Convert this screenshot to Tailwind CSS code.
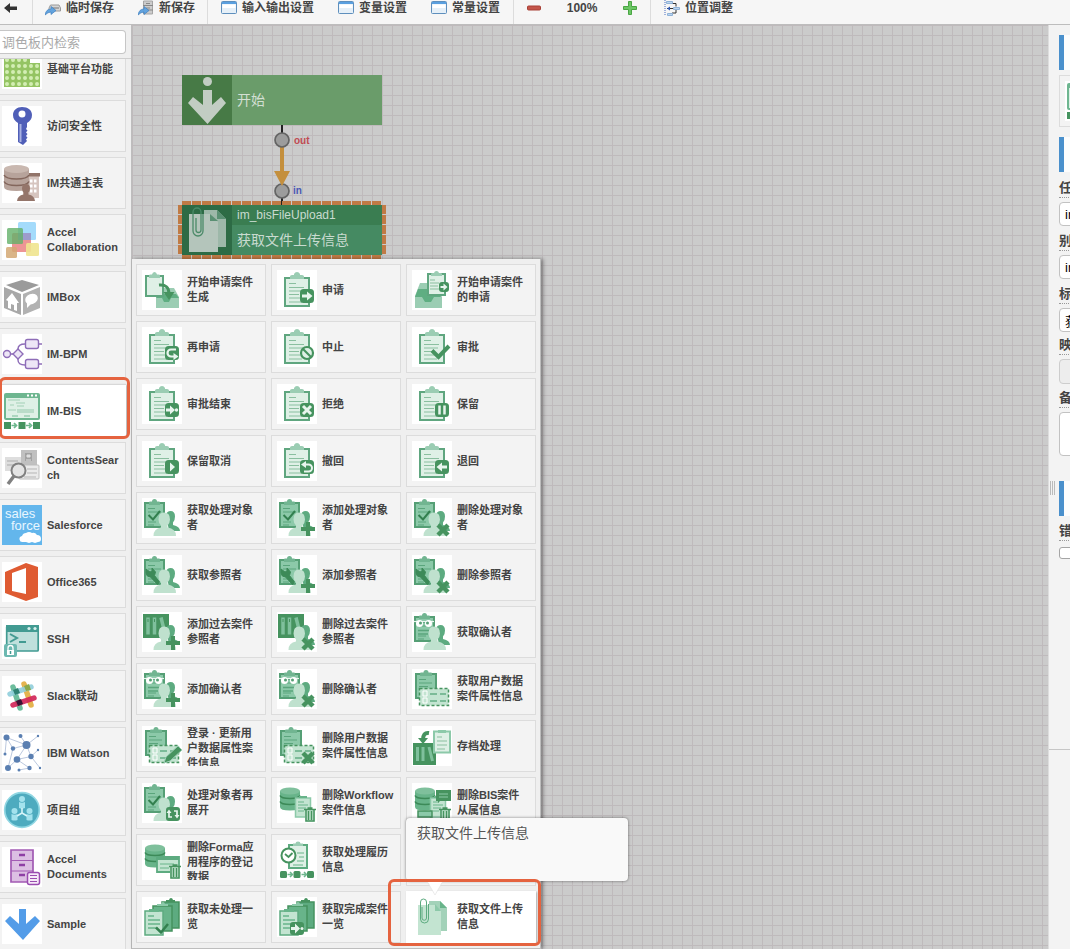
<!DOCTYPE html>
<html lang="zh-CN">
<head>
<meta charset="utf-8">
<title>工作流编辑器</title>
<script src="https://cdn.jsdelivr.net/npm/@tailwindcss/browser@4"></script>
</head>
<body class="h-screen overflow-hidden bg-[#efefef] font-['Liberation_Sans','Noto_Sans_CJK_SC',sans-serif] text-[#444] flex flex-col">

<svg class="hidden" aria-hidden="true">
  <!-- clipboard and its badges -->
  <symbol id="clip" viewBox="0 0 40 40"><path d="M8 8h24v28H8z" fill="#dff0e6" stroke="#5fa67f" stroke-width="2"/><path d="M13 9V6.500q0-1.500 2-1.500h2V4q1-2 3-2t3 2v1h2q2 0 2 1.500V9z" fill="#9bcdb3"/><path d="M12 13.500h7M12 17.500h15M12 21h14M12 24.500h10M12 28h11M12 32h13" stroke="#8abf9f" stroke-width="1.200"/></symbol>
  <symbol id="badge" viewBox="0 0 40 40"><rect x="23" y="19" width="14" height="14" rx="3.500" fill="#46935f"/></symbol>
  <symbol id="b-right" viewBox="0 0 40 40"><use href="#badge"/><path d="M25 24.500h5V21.500l5.500 4.500-5.500 4.500V27.500h-5z" fill="#e8f5ee"/></symbol>
  <symbol id="b-left" viewBox="0 0 40 40"><use href="#badge"/><path d="M35 24.500h-5V21.500l-5.500 4.500 5.500 4.500V27.500h5z" fill="#e8f5ee"/></symbol>
  <symbol id="b-end" viewBox="0 0 40 40"><use href="#badge"/><path d="M24 24.500h4V21.500l5 4.500-5 4.500V27.500h-4z" fill="#e8f5ee"/><circle cx="34.500" cy="26" r="1.700" fill="#e8f5ee"/></symbol>
  <symbol id="b-redo" viewBox="0 0 40 40"><use href="#badge"/><path d="M34 22.500h-5a3.500 3.500 0 0 0 0 7h3" fill="none" stroke="#e8f5ee" stroke-width="2.200"/><path d="M31.500 26l5 3.500-5 3.500z" fill="#e8f5ee"/></symbol>
  <symbol id="b-undo" viewBox="0 0 40 40"><use href="#badge"/><path d="M28 23.500h3.500a3.500 3.500 0 0 1 0 7h-4.500" fill="none" stroke="#e8f5ee" stroke-width="2"/><path d="M29 20l-5 3.500 5 3.500z" fill="#e8f5ee"/></symbol>
  <symbol id="b-stop" viewBox="0 0 40 40"><circle cx="30" cy="26" r="6" fill="#dff0e6" stroke="#46935f" stroke-width="2.200"/><path d="M26 22l8 8" stroke="#46935f" stroke-width="2.200"/></symbol>
  <symbol id="b-check" viewBox="0 0 40 40"><path d="M20 23.500l6.500 6.500L37 19" fill="none" stroke="#46935f" stroke-width="4"/></symbol>
  <symbol id="b-x" viewBox="0 0 40 40"><use href="#badge"/><path d="M26 22l8 8M34 22l-8 8" stroke="#e8f5ee" stroke-width="3"/></symbol>
  <symbol id="b-pause" viewBox="0 0 40 40"><use href="#badge"/><path d="M27.500 21.500v9M32.500 21.500v9" stroke="#e8f5ee" stroke-width="2.500"/></symbol>
  <symbol id="b-play" viewBox="0 0 40 40"><use href="#badge"/><path d="M28 21.500l5 4.500-5 4.500z" fill="#e8f5ee"/></symbol>
  <symbol id="b-loop" viewBox="0 0 40 40"><rect x="24" y="24" width="14" height="14" rx="3" fill="#46935f"/><path d="M32 28h3v6M30 34h-3v-6" fill="none" stroke="#e8f5ee" stroke-width="1.700"/><path d="M32.500 32h5l-2.500 3.500zM24.500 30h5l-2.500-3.500z" fill="#e8f5ee"/></symbol>
  <!-- start of application -->
  <symbol id="gen" viewBox="0 0 40 40"><path d="M19 18h13l5 9v11H14V27z" fill="#9bcdb3"/><path d="M17 24h17l3 4h-8l-2 4h-5l-2-4h-6z" fill="#5fae82"/><path d="M4 6h17v20H4z" fill="#dff0e6" stroke="#5fa67f" stroke-width="2"/><path d="M7 8V5.500q0-1 1.500-1H10q.5-2.500 2.500-2.500T15 4.500h1.500q1.500 0 1.500 1V8z" fill="#9bcdb3"/><path d="M17 15q10-1 10 9" fill="none" stroke="#46935f" stroke-width="3"/><path d="M21.500 22h11L27 30z" fill="#46935f"/></symbol>
  <symbol id="tray" viewBox="0 0 40 40"><path d="M8 13h16l6 14v11H3V26z" fill="#9bcdb3"/><path d="M6 19h18l5 8h-7l-3 5h-6l-3-5H3z" fill="#5fae82"/><path d="M16 4h17v21H16z" fill="#dff0e6" stroke="#5fa67f" stroke-width="2"/><path d="M19 6V4q0-1 1.500-1H22q.500-2 2.500-2T27 3h1.500Q30 3 30 4v2z" fill="#9bcdb3"/><path d="M18 10h5M18 13h9M18 16h8M18 19h9" stroke="#8abf9f"/><rect x="27" y="12" width="10" height="10" rx="3" fill="#46935f"/><path d="M28.500 16h3v-2.500l4 3.500-4 3.500V18h-3z" fill="#e8f5ee"/></symbol>
  <!-- people group -->
  <symbol id="pclip" viewBox="0 0 40 40"><path d="M3 5h19v24H3z" fill="#8cc9a9" stroke="#559f75" stroke-width="2"/><path d="M7 7V4.500Q7 3.500 8 3.500h2q0-2.500 2.500-2.500T15 3.500h2q1 0 1 1V7z" fill="#71b591"/><path d="M6 10.500h7M6 14h13M6 24h8M6 27h6" stroke="#5aa57c"/></symbol>
  <symbol id="pcheck" viewBox="0 0 40 40"><path d="M6.500 17l4.500 4.500L18 13" fill="none" stroke="#33804f" stroke-width="2"/></symbol>
  <symbol id="wrench" viewBox="0 0 40 40"><path d="M4 14l4 3 2-1 0-3 3.500 4-1 3.500 5 6.500-2 2.500-7-7.500q-4 0-4.500-4z" fill="#3c8a58" stroke="#3c8a58"/></symbol>
  <symbol id="glasses" viewBox="0 0 40 40"><path d="M2 9.500h20" stroke="#e8f5ee" stroke-width="1.200"/><circle cx="7.500" cy="11.500" r="3.500" fill="#fff"/><circle cx="16.500" cy="11.500" r="3.500" fill="#fff"/><circle cx="8.500" cy="11" r="1.500" fill="#559f75"/><circle cx="15.500" cy="11" r="1.500" fill="#559f75"/><path d="M6 18.500h13M6 22h10" stroke="#5aa57c" stroke-width="1.300"/></symbol>
  <symbol id="books" viewBox="0 0 40 40"><path d="M1 2h26v24H1z" fill="#46935f"/><path d="M6 5.500v17M12.500 5.500v17M19 5.500l3 12" stroke="#7fc09c" stroke-width="3.500"/><path d="M6 7v3M12.500 7v3" stroke="#46935f"/></symbol>
  <symbol id="people" viewBox="0 0 40 40"><path d="M24 16.500q1-3.500 4.500-3.500 4.500 0 4.500 5.500 0 4-2 6v2.500q7 1.500 7 6H27z" fill="#5dab80"/><path d="M22 14.500q6 0 6 7 0 3.500-2.500 6v2q8.500 1 8.500 8.500H11.500q0-7.500 7.500-8.500v-2q-2.500-2.500-2.500-6 0-7 5.500-7z" fill="#bfe1ce"/></symbol>
  <symbol id="m-plus" viewBox="0 0 40 40"><path d="M29 24h4v5h5v4h-5v5h-4v-5h-5v-4h5z" fill="#46935f"/></symbol>
  <symbol id="m-x" viewBox="0 0 40 40"><path d="M26 27l10 10M36 27L26 37" stroke="#46935f" stroke-width="4.500"/></symbol>
  <!-- tickets, databases, documents -->
  <symbol id="uclip" viewBox="0 0 40 40"><path d="M4 5h20v24H4z" fill="#8cc9a9" stroke="#559f75" stroke-width="2"/><path d="M8 7V4.500Q8 3.500 9 3.500h2.500q0-2.500 2.500-2.500T16.500 3.500H19q1 0 1 1V7z" fill="#71b591"/><path d="M7 10.500h7M7 14h13M7 17.500h9" stroke="#5aa57c"/></symbol>
  <symbol id="ticket" viewBox="0 0 40 40"><path d="M7.500 19.500h29v17h-29z" fill="#c3e4d1" stroke="#46935f" stroke-width="1.500" stroke-dasharray="3 2"/><path d="M11 22h4v5h-4zM11 29h4v5h-4z" fill="none" stroke="#fff"/><path d="M18 25h7M28 25h6M18 32h7M28 32h6" stroke="#64ad85" stroke-width="1.500"/></symbol>
  <symbol id="m-pencil" viewBox="0 0 40 40"><path d="M22 37l2-6 12-11 4 4-12 11z" fill="#46935f" stroke="#9bcdb3"/></symbol>
  <symbol id="archive" viewBox="0 0 40 40"><path d="M1 17h23v22H1z" fill="#46935f"/><path d="M5.500 21v14M11 21v14M17 21l3.500 14" stroke="#7fc09c" stroke-width="3"/><path d="M22 5.500h16v21H22z" fill="#dff0e6" stroke="#8cc9a9" stroke-width="2"/><path d="M26 7V4h8v3z" fill="#8cc9a9"/><path d="M25 11h5M25 15h10M25 19h10M25 23h8" stroke="#8abf9f"/><path d="M17 7q-6-1-6 7" fill="none" stroke="#46935f" stroke-width="4"/><path d="M6 12h10l-5 6z" fill="#46935f"/></symbol>
  <symbol id="db" viewBox="0 0 40 40"><path d="M3 8v16q0 3.500 10 3.500T23 24V8z" fill="#68b48a"/><ellipse cx="13" cy="8" rx="10" ry="3.500" fill="#7fc09c"/><path d="M3 12.500q1 3 10 3t10-3M3 18.500q1 3 10 3t10-3" fill="none" stroke="#3c8a58" stroke-width="1.500"/></symbol>
  <symbol id="trash" viewBox="0 0 40 40"><path d="M28 27h10v11.500H28z" fill="#c3e4d1"/><path d="M27 26.500h12M30.500 25h5M29 27v11h8V27M31.500 28v9M34.500 28v9" fill="none" stroke="#46935f" stroke-width="1.500"/></symbol>
  <symbol id="doc" viewBox="0 0 40 40"><path d="M18.500 15h15v19h-15z" fill="#c3e4d1" stroke="#8cc9a9" stroke-width="1.500"/><path d="M22 15v-2h8v2z" fill="#68b48a"/><path d="M21 19h6M21 22h10M21 25h8M21 28h6" stroke="#68b48a"/></symbol>
  <symbol id="bisx" viewBox="0 0 40 40"><path d="M24 7h15v11H28l-2 2v-2h-2z" fill="#46935f"/><path d="M27 11h9M27 14h9" stroke="#8cc9a9"/><path d="M6 28h14v6H6z" fill="#8cc9a9" stroke="#46935f" stroke-width="1.500"/></symbol>
  <symbol id="form" viewBox="0 0 40 40"><path d="M15 17h22v15H15z" fill="#c3e4d1" stroke="#5dab80" stroke-width="1.800"/><path d="M15 18.500h22" stroke="#5dab80" stroke-width="3"/><path d="M18 24h14M18 28h9" stroke="#68b48a"/></symbol>
  <symbol id="hist" viewBox="0 0 40 40"><path d="M12 5h18v23H12z" fill="#dff0e6" stroke="#5dab80" stroke-width="2"/><path d="M16 6V3.500h2.500q0-2 2.500-2t2.500 2H26V6z" fill="#9bcdb3"/><path d="M20 13h7M22 17h5M20 21h7M16 25h10" stroke="#68b48a"/><circle cx="11.500" cy="15.500" r="7" fill="#fff" stroke="#46935f" stroke-width="2"/><path d="M8 14l3.500 3L15.500 13" fill="none" stroke="#46935f" stroke-width="1.800"/></symbol>
  <symbol id="steps" viewBox="0 0 40 40"><rect x="3" y="31" width="7" height="7" rx="1.500" fill="#46935f"/><rect x="16.500" y="31" width="7" height="7" rx="1.500" fill="#46935f"/><rect x="30" y="31" width="7" height="7" rx="1.500" fill="#46935f"/><path d="M10.500 34.500h4M24.500 34.500h4M13 32l2.500 2.500L13 37M27 32l2.500 2.500L27 37" fill="none" stroke="#6db78d" stroke-width="1.500"/></symbol>
  <symbol id="stack" viewBox="0 0 40 40"><path d="M20 5h17v26H20z" fill="#5dab80" stroke="#46935f" stroke-width="1.500"/><path d="M24 5V3h3q.5-2 2-2t2 2h2v2z" fill="#46935f"/><path d="M11 9h19v25H11z" fill="#68b48a" stroke="#46935f" stroke-width="1.500"/><path d="M15 9V7h4q.5-2 2-2t2 2h3v2z" fill="#8cc9a9"/><path d="M3 14h18v24H3z" fill="#c3e4d1" stroke="#5dab80" stroke-width="1.500"/><path d="M7 15v-3h10v3z" fill="#68b48a"/><path d="M6 19h6M6 23h12M6 27h12M6 31h8" stroke="#68b48a" stroke-width="1.300"/></symbol>
  <symbol id="stackcheck" viewBox="0 0 40 40"><path d="M14 30.500l5 5L26 27" fill="none" stroke="#33804f" stroke-width="2.500"/></symbol>
  <symbol id="stackend" viewBox="0 0 40 40"><rect x="13" y="25" width="14" height="13" rx="3" fill="#46935f"/><path d="M14 30h4v-3.500l5 5-5 5V33h-4z" fill="#e8f5ee"/><circle cx="25" cy="31.500" r="1.500" fill="#e8f5ee"/></symbol>
  <symbol id="files" viewBox="0 0 40 40"><path d="M17 4h11l7 7v23H17z" fill="#a3d2b9"/><path d="M28 4v7h7z" fill="#68b48a"/><path d="M6 8h17l6 6v24H6z" fill="#c3e4d1"/><path d="M23 7v7h6z" fill="#8cc9a9"/><path d="M10 10v11a2 2 0 0 0 4.500 0V5a3 3 0 0 0-6 0v17a4 4 0 0 0 8 0V7" fill="none" stroke="#5dab80" stroke-width="1"/></symbol>

  <!-- category icons -->
  <symbol id="s-grid" viewBox="0 0 40 40"><path d="M2 8h26v6h10v24H2z" fill="#94c463"/><g stroke="#d3eeb4" stroke-width="4" stroke-linecap="round" stroke-dasharray="0 6"><path d="M5 11h20M5 17h31M5 23h31M5 29h31M5 35h31"/></g></symbol>
  <symbol id="s-key" viewBox="0 0 40 40"><path fill-rule="evenodd" d="M20 1c6 0 10 3 10 8 0 4-2 6-5 8v4l-1 2 1.500 1.500-1.500 2 1.500 1.500-1.500 2 1.500 1.500-1.500 2 1 1.500-4 4-5-3V17c-3-2-5-4-5-8 0-5 4-8 9-8zm0 3.500a3.500 3.500 0 1 0 .01 7 3.500 3.500 0 0 0-.01-7z" fill="#505fb8"/><path d="M18.500 18v18" stroke="#a9b2e2" stroke-width="2"/></symbol>
  <symbol id="s-master" viewBox="0 0 40 40"><path d="M21 13h16v22H21z" fill="#d6c5bf"/><path d="M20 10h18v3.500H20z" fill="#927469"/><path d="M24 18h11M24 23h11M24 28h11" stroke="#fff" stroke-width="3" stroke-dasharray="2.500 1.500"/><path d="M2 6v18q0 4 12.500 4T27 24V6z" fill="#b7a39b"/><ellipse cx="14.500" cy="6" rx="12.500" ry="4" fill="#c9b8b0"/><path d="M2 12q2 4 12.500 4T27 12M2 18.500q2 4 12.500 4T27 18.500" fill="none" stroke="#83665c" stroke-width="1.500"/><path d="M24 21q4 0 4 4.500 0 2.500-1.500 4v2q6 1 6.500 6.500H15q.5-5.500 6.500-6.500v-2Q20 28 20 25.500 20 21 24 21z" fill="#94756a"/></symbol>
  <symbol id="s-collab" viewBox="0 0 40 40"><rect x="16" y="2" width="18" height="18" rx="1.500" fill="#a4dbfb"/><rect x="10" y="13" width="19" height="19" rx="1.500" fill="#e87b7b" opacity=".8"/><path d="M16 13h13v7H16z" fill="#9d9ccc"/><rect x="5" y="8" width="16" height="16" rx="1.500" fill="#63b069" opacity=".8"/><rect x="4" y="27" width="11" height="11" rx="1.500" fill="#d3a873" opacity=".85"/><rect x="24" y="23" width="13" height="13" rx="1.500" fill="#f0e48f" opacity=".9"/></symbol>
  <symbol id="s-box" viewBox="0 0 40 40"><path d="M4 8l16-5 17 5-17 7z" fill="#9b9b9b"/><path d="M2 10l17 7v21L2 31z" fill="#a8a8a8"/><path d="M38 10l-17 7v21l17-7z" fill="#b2b2b2"/><path d="M4 23l6-7 7 10h-2v8l-3-1v-5l-3-1v5l-3-1v-7z" fill="#fff"/><ellipse cx="29.500" cy="22" rx="6.500" ry="5" transform="rotate(-20 29.500 22)" fill="#fff"/><path d="M25 24v7l5-5z" fill="#fff"/></symbol>
  <symbol id="s-bpm" viewBox="0 0 40 40"><g fill="#ede6f6" stroke="#8e6db8" stroke-width="1.400"><path d="M9 20h3M16 16v-1q0-5 7-5M16 25v1q0 5 7 5M37 10h3M37 30h3" fill="none"/><circle cx="5" cy="20" r="3.500"/><path d="M16 15l5 5-5 5-5-5z"/><rect x="23.500" y="5.500" width="13" height="9" rx="2"/><rect x="23.500" y="25.500" width="13" height="9" rx="2"/></g></symbol>
  <symbol id="s-bis" viewBox="0 0 40 40"><rect x="2" y="2" width="36" height="27" rx="2" fill="#6eb690"/><path d="M4 7h32v20H4z" fill="#def0e6"/><path d="M25 4.500h2M29 4.500h2M33 4.500h2" stroke="#fff" stroke-width="2"/><path d="M6 9h12M8 14h4M6 19h8M14 12h9M15 15h7" stroke="#b7dac6" stroke-width="1.500"/><path d="M15 18h17v4H15z" fill="#b9dcc9"/><path d="M10 25h6M22 25h6" stroke="#9bcdb3" stroke-width="1.500"/><path d="M2 31h7v7H2zM16.500 31h7v7h-7zM31 31h7v7h-7z" fill="#46935f"/><path d="M9.500 34.500h4M24 34.500h4M12 32l2.500 2.500L12 37M27 32l2.500 2.500L27 37" fill="none" stroke="#6db78d" stroke-width="1.700"/></symbol>
  <symbol id="s-search" viewBox="0 0 40 40"><path d="M19 2h16v17H19z" fill="#c0c0c0"/><path d="M23 5h7v8h-7z" fill="#a2a2a2"/><path d="M25 7h3v2h-3zM24 12h5" stroke="#e0e0e0" fill="#ddd"/><path d="M3 9h16v14H3z" fill="#dedede"/><path d="M5 13h11M5 17h8" stroke="#ababab"/><rect x="17" y="17" width="20" height="14" rx="1" fill="#eaeaea" stroke="#bdbdbd"/><path d="M25 21h10M25 25h10M22 29h12" stroke="#b5b5b5"/><circle cx="16.500" cy="22.500" r="7" fill="#e4e4e4" stroke="#808080" stroke-width="2"/><path d="M12 28l-6 8" stroke="#808080" stroke-width="3.500"/></symbol>
  <symbol id="s-sf" viewBox="0 0 40 40"><path d="M0 0h40v40H0z" fill="#63b6ec"/><g font-size="13" font-weight="400" fill="#e8f6ff" font-family="Liberation Sans"><text x="3" y="13">sales</text><text x="9" y="25">force</text></g><path d="M21 37a3 3 0 0 1-1-6q1-3 4-3 3-2 6 0 3-1 5 2 4 0 4 4 0 3-3 3l-3 1-3-1-3 1-3-1z" fill="#fff"/></symbol>
  <symbol id="s-office" viewBox="0 0 40 40"><path fill-rule="evenodd" d="M24 1l12 4v30l-12 4-21-8V10zM24 6l-14 5v18l14 3z" fill="#df5b32"/></symbol>
  <symbol id="s-ssh" viewBox="0 0 40 40"><rect x="4.700" y="7" width="31.500" height="25" rx="1" fill="#bfe0dc" stroke="#429b92" stroke-width="1.700"/><path d="M4 6h33v7H4z" fill="#429b92"/><circle cx="27" cy="9.500" r="1.600" fill="#d8f0ed"/><circle cx="33" cy="9.500" r="1.600" fill="#d8f0ed"/><path d="M8 15l7 4-7 4M17 23h7" fill="none" stroke="#429b92" stroke-width="2"/><rect x="2" y="25" width="13" height="13" rx="2" fill="#6cb8b0"/><path d="M5 31h7v5H5z" fill="#fff"/><path d="M6 31v-2q0-2.500 2.500-2.500T11 29v2M8.500 32v3" fill="none" stroke="#fff" stroke-width="1.300"/><path d="M8.500 32v3" stroke="#429b92" stroke-width="1.500"/></symbol>
  <symbol id="s-slack" viewBox="0 0 40 40"><g stroke-width="5.500" stroke-linecap="round"><path d="M22 8l7 21" stroke="#e5b450"/><path d="M11 11l7 21" stroke="#6dbd9d"/><path d="M8 18l21-7" stroke="#91cfdc" opacity=".9"/><path d="M11 29l21-7" stroke="#d3285a" opacity=".92"/></g><path d="M11 14l5-2 2 5-5 2z" fill="#2f8273"/><path d="M22 10l5-2 2 6-5 1z" fill="#8ba94a"/><path d="M14 25l5-2 2 5-5 2z" fill="#3b1435"/></symbol>
  <symbol id="s-watson" viewBox="0 0 40 40"><path d="M4.500 4.500L24.500 12 36 3M18.500 3l6 9L11 15.500 6 35M4.500 4.500l6.500 11M4.500 4.500L3 21M24.500 12L29 23.500 15 26.500 24.500 12M29 23.500l7.500-7M29 23.500L38 35M15 26.500L6 35M15 26.500L27.500 35 17 37" fill="none" stroke="#a9bad5" stroke-width=".8"/><g fill="#5a7fb1"><circle cx="4.500" cy="4.500" r="3"/><circle cx="24.500" cy="12" r="4"/><circle cx="18.500" cy="3" r="2"/><circle cx="36" cy="3" r="1.200"/><circle cx="11" cy="15.500" r="2.200"/><circle cx="3" cy="21" r="1.500"/><circle cx="29" cy="23.500" r="2.700"/><circle cx="15" cy="26.500" r="3.300"/><circle cx="6" cy="35" r="3"/><circle cx="27.500" cy="35" r="2.200"/><circle cx="17" cy="37" r="1.500"/><circle cx="38" cy="35" r="1.200"/><circle cx="36" cy="17" r="1.200"/></g></symbol>
  <symbol id="s-person" viewBox="0 0 12 14"><circle cx="5" cy="3" r="3" fill="#a3e2ed"/><path d="M2 6q3 1.500 6 0v6q-3 1-6 0z" fill="#a3e2ed"/></symbol>
  <symbol id="s-project" viewBox="0 0 40 40"><circle cx="20" cy="20" r="17.300" fill="#4eabbf" stroke="#91d7e3" stroke-width="1.700"/><use href="#s-person" x="15" y="6" width="12" height="14"/><use href="#s-person" x="7.500" y="18" width="12" height="14"/><use href="#s-person" x="22.500" y="18" width="12" height="14"/><path d="M20 18v5l-5 3M20 23l5 3" stroke="#d6f4f9" stroke-width="1.600" fill="none"/></symbol>
  <symbol id="s-docs" viewBox="0 0 40 40"><path d="M9 3h22v32H9z" fill="#dcbfe3" stroke="#a25bb4" stroke-width="1.700"/><path d="M9 13.500h22M9 24h22" stroke="#a25bb4"/><path d="M17 8h6M17 18h6M17 28h6" stroke="#8e3fa5" stroke-width="2.500"/><rect x="25.500" y="25.500" width="12" height="12" rx="2" fill="#f6e9f8" stroke="#9a4cb0" stroke-width="1.500"/><path d="M28 28.500h7M28 31.500h7M28 34.500h7" stroke="#9a4cb0" stroke-width="1.200"/></symbol>
  <symbol id="s-sample" viewBox="0 0 40 40"><path d="M17 5h7v15l9-8 5 5L21 36 3 17l5-5 9 8z" fill="#539ce8"/></symbol>

  <!-- toolbar icons -->
  <symbol id="t-window" viewBox="0 0 16 16"><rect x=".5" y="1.500" width="15" height="12" rx="1" fill="#e6f0f8" stroke="#5e8fbd"/><path d="M1 2h14v2H1z" fill="#5aa0e0"/><path d="M1.500 4.500h13V8h-13z" fill="#fff"/></symbol>
  <symbol id="t-arrow" viewBox="0 0 16 16"><path d="M0 15q1-6 6-6V6.500l5 4-5 4V12q-3 0-6 3z" fill="#62a3de" stroke="#3f7fc0" stroke-width=".7"/></symbol>
</svg>

<header class="flex h-[25px] shrink-0 items-start border-b border-[#bdbdbd] bg-[#f6f6f6] text-xs font-bold leading-4 whitespace-nowrap">
  <button class="flex h-4 w-8 shrink-0 items-center pl-1" aria-label="返回"><svg class="size-3.5" viewBox="0 0 14 14"><path d="M0 7l6-5v3.500h7v3.500H6v3z" fill="#333"/></svg></button>
  <div class="flex h-6 gap-6 border-l border-[#dcdcdc] pl-3">
    <button class="flex h-4 items-center gap-[5px]"><svg class="size-4" viewBox="0 0 16 16"><path d="M4 8l1.500-3h8.500l1.500 3v3H4z" fill="#d5d5d5" stroke="#9a9a9a"/><path d="M7 8h7" stroke="#777"/><use href="#t-arrow"/></svg>临时保存</button>
    <button class="flex h-4 items-center gap-[5px]"><svg class="size-4" viewBox="0 0 16 16"><path d="M5.500 1h9v13h-9z" fill="#ccc" stroke="#a5a5a5"/><path d="M5 5.500h10M5 10h10M8 3.500h4M8 8h4" stroke="#888"/><use href="#t-arrow"/></svg>新保存</button>
  </div>
  <div class="ml-3 flex h-6 gap-6 border-l border-[#dcdcdc] pl-[13px]">
    <button class="flex h-4 items-center gap-[5px]"><svg class="size-4"><use href="#t-window"/></svg>输入输出设置</button>
    <button class="flex h-4 items-center gap-[5px]"><svg class="size-4"><use href="#t-window"/></svg>变量设置</button>
    <button class="flex h-4 items-center gap-[5px]"><svg class="size-4"><use href="#t-window"/></svg>常量设置</button>
  </div>
  <div class="ml-[13px] flex h-6 gap-6 border-l border-[#dcdcdc] pl-3">
    <button class="flex h-4 items-center" aria-label="缩小"><svg class="size-4" viewBox="0 0 16 16"><rect x="1.500" y="6" width="13" height="4" rx="1" fill="#c4554a" stroke="#a84036"/></svg></button>
    <span class="w-8 text-center">100%</span>
    <button class="flex h-4 items-center" aria-label="放大"><svg class="size-4" viewBox="0 0 16 16"><path d="M6.500 1.500h3v5h5v3h-5v5h-3v-5h-5v-3h5z" fill="#6cc765" stroke="#4aa544"/></svg></button>
  </div>
  <div class="ml-3 flex h-6 border-l border-[#dcdcdc] pl-[13px]">
    <button class="flex h-4 items-center gap-[5px]"><svg class="size-4" viewBox="0 0 16 16"><path d="M1 0v16" stroke="#4a6fc0" stroke-dasharray="1 1"/><path d="M7 3.500h5v3M12 10v3H8M3 8.500h6" fill="none" stroke="#333"/><path d="M3 8.500l3-2v4z" fill="#2c55b0"/><path d="M2.500 1.500h6v2h-6zM9.500 7.500h6v2h-6zM3.500 13.500h5v2h-5z" fill="#bcd6f0" stroke="#8fb2d8"/></svg>位置调整</button>
  </div>
</header>

<div class="flex min-h-0 flex-1">
  <aside class="flex w-[132px] shrink-0 flex-col border-r border-[#bdbdbd] bg-[#efefef]">
    <div class="h-[34px] shrink-0 border-b border-[#cfcfcf] pt-[5px]">
      <label class="sr-only" for="palette-search">调色板内检索</label>
      <input id="palette-search" type="text" placeholder="调色板内检索" class="block h-6 w-[126px] rounded-r-sm border border-l-0 border-[#c6c6c6] bg-white pl-[2px] text-[13px] placeholder:text-[#a9a9a9]">
    </div>
    <nav class="min-h-0 flex-1 overflow-hidden" aria-label="分类">
      <div id="categories" class="-mt-4 flex w-[126px] flex-col gap-[5px]"></div>
    </nav>
  </aside>

  <main class="relative min-w-0 flex-1 bg-[#cbcbcb] bg-[linear-gradient(to_right,#bfbabc_1px,transparent_1px),linear-gradient(to_bottom,#bfbabc_1px,transparent_1px)] bg-[size:10px_10px]">
    <!-- flow nodes on the free canvas -->
    <section class="absolute top-[50px] left-[50px] flex h-[50px] w-[200px] bg-[#6a9c6a] text-sm text-[#d3dfd3]">
      <svg class="size-[50px] bg-[#477a46]" viewBox="0 0 50 50" fill="#c2cdc3"><circle cx="25.500" cy="6.500" r="4.500"/><path d="M21 15h9v15l9-8 5 6-18.500 21L6 28l5-6 10 8z"/></svg>
      <span class="self-center pl-[5px]">开始</span>
    </section>
    <svg class="absolute top-[100px] left-[142px] h-20 w-4" viewBox="0 0 16 80"><path d="M8 0v8M8 73v7" stroke="#222" stroke-width="2"/><path d="M8 22v26" stroke="#c48f3d" stroke-width="4"/><g fill="#9c9c9c" stroke="#646464" stroke-width="1.700"><circle cx="8" cy="15" r="7"/><circle cx="8" cy="66" r="7"/></g><path d="M0 46h16L8 61z" fill="#c48f3d"/></svg>
    <span class="absolute top-[110px] left-[162px] text-[10px] leading-3 font-bold text-[#c04a52]">out</span>
    <span class="absolute top-[160px] left-[161px] text-[10px] leading-3 font-bold text-[#4a57b4]">in</span>
    <svg class="absolute top-44 left-[46px] h-[58px] w-52" viewBox="0 0 208 58"><g stroke="#c07a45" stroke-width="4" stroke-dasharray="9 1"><path d="M4 2h200M4 56h200M2 4v50M206 4v50"/></g></svg>
    <section class="absolute top-[180px] left-[50px] flex h-[50px] w-[200px] bg-[#458a62] text-[#c9dbd0]">
      <svg class="size-[50px] shrink-0 bg-[#2d6b45]" viewBox="0 0 50 50"><path d="M22 5h13l9 9v28H22z" fill="#9db8a9"/><path d="M35 5v9h9z" fill="#5a9073"/><path d="M7 9h21l8 8v30H7z" fill="#b4c5bb"/><path d="M28 9v7h8z" fill="#5a9073"/><path d="M14 13v12a2 2 0 0 0 5 0V7a4 4 0 0 0-8 0v19a5 5 0 0 0 10 0V9" fill="none" stroke="#4b8a68" stroke-width="1.300"/></svg>
      <div class="flex-1">
        <p class="h-5 bg-[#3a7d51] pl-[5px] text-xs leading-5">im_bisFileUpload1</p>
        <p class="pl-[5px] text-sm leading-[30px]">获取文件上传信息</p>
      </div>
    </section>

    <!-- fly-out palette -->
    <div class="absolute top-[234px] left-0 border-r border-b border-[#bdbdbd] bg-[#efefef] px-1 py-[5px] shadow-[2px_0_4px_rgba(0,0,0,0.4)]">
      <div id="tasks" class="grid grid-cols-[repeat(3,130px)] gap-[5px]"></div>
    </div>

    <div role="tooltip" class="absolute top-[793px] left-[274px] h-[63px] w-[222px] rounded-sm bg-[#f9f9f9] px-[11px] py-[5px] text-sm leading-5 text-[#555] shadow-[0_0_3px_rgba(0,0,0,0.5)]">获取文件上传信息
      <svg class="absolute top-[63px] left-[21px] h-[14px] w-4" viewBox="0 0 16 14"><path d="M0 0h16L8 14z" fill="#fff" stroke="#ddd" stroke-width=".6"/></svg>
    </div>
    <div class="pointer-events-none absolute top-[854px] left-[256px] h-[67px] w-[153px] rounded-md border-3 border-[#e5633f]"></div>
  </main>

  <aside class="flex w-[22px] shrink-0 flex-col overflow-hidden border-l border-[#dedede] bg-[#f3f3f3] text-[13px] font-bold">
    <div class="flex h-[725px] shrink-0 border-b border-[#c6c6c6]">
      <div class="w-2.5 shrink-0 pt-[456px] pl-px"><div class="flex h-3.5 gap-px"><i class="w-px bg-[#bbb]"></i><i class="w-px bg-[#bbb]"></i><i class="w-px bg-[#bbb]"></i></div></div>
      <form class="w-60 shrink-0 pt-[10px]">
        <div class="h-[35px] border-l-5 border-[#4a90cc] bg-[#fdfdfd]"></div>
        <div class="mt-[5px] h-[52px] w-[130px] border border-[#dcdcdc] p-[5px]"><svg class="size-10 bg-white"><use href="#s-bis"/></svg></div>
        <div class="mt-[10px] h-[35px] border-l-5 border-[#4a90cc] bg-[#fdfdfd]"></div>
        <label for="f1" class="mt-2 block h-[18px] border-b border-dotted border-[#999] leading-4">任</label>
        <input id="f1" value="im" class="mt-1 block h-6 w-50 rounded-sm border border-[#c2c2c2] bg-white px-[5px] font-normal text-black">
        <label for="f2" class="mt-[7px] block h-[18px] border-b border-dotted border-[#999] leading-4">别</label>
        <input id="f2" value="im" class="mt-1 block h-6 w-50 rounded-sm border border-[#c2c2c2] bg-white px-[5px] font-normal text-black">
        <label for="f3" class="mt-[7px] block h-[18px] border-b border-dotted border-[#999] leading-4">标</label>
        <input id="f3" value="获" class="mt-1 block h-6 w-50 rounded-sm border border-[#c2c2c2] bg-white px-[5px] font-normal text-black">
        <label for="f4" class="mt-[5px] block h-[18px] border-b border-dotted border-[#999] leading-4">映</label>
        <button id="f4" type="button" class="mt-1 block h-[25px] w-50 rounded-sm border border-[#cdcdcd] bg-[#ededed]"></button>
        <label for="f5" class="mt-[6px] block h-[18px] border-b border-dotted border-[#999] leading-4">备</label>
        <textarea id="f5" class="mt-1 block h-11 w-50 resize-none rounded-sm border border-[#c2c2c2] bg-white"></textarea>
        <div class="mt-[25px] h-[35px] border-l-5 border-[#4a90cc] bg-[#fdfdfd]"></div>
        <label for="f6" class="mt-[7px] block h-[18px] border-b border-dotted border-[#999] leading-4">错</label>
        <input id="f6" type="checkbox" class="mt-[6px] block h-3 w-3.5 appearance-none rounded-[3px] border border-[#a5a5a5] bg-white">
      </form>
    </div>
  </aside>
</div>

<script>
  const categories = [
    ["基础平台功能", "s-grid"], ["访问安全性", "s-key"], ["IM共通主表", "s-master"], ["Accel Collaboration", "s-collab"],
    ["IMBox", "s-box"], ["IM-BPM", "s-bpm"], ["IM-BIS", "s-bis"], ["ContentsSearch", "s-search"], ["Salesforce", "s-sf"],
    ["Office365", "s-office"], ["SSH", "s-ssh"], ["Slack联动", "s-slack"], ["IBM Watson", "s-watson"], ["项目组", "s-project"],
    ["Accel Documents", "s-docs"], ["Sample", "s-sample"]
  ];
  const tasks = [
    ["开始申请案件生成", "gen"], ["申请", "clip b-right"], ["开始申请案件的申请", "tray"],
    ["再申请", "clip b-redo"], ["中止", "clip b-stop"], ["审批", "clip b-check"],
    ["审批结束", "clip b-end"], ["拒绝", "clip b-x"], ["保留", "clip b-pause"],
    ["保留取消", "clip b-play"], ["撤回", "clip b-undo"], ["退回", "clip b-left"],
    ["获取处理对象者", "pclip pcheck people"], ["添加处理对象者", "pclip pcheck people m-plus"], ["删除处理对象者", "pclip pcheck people m-x"],
    ["获取参照者", "pclip wrench people"], ["添加参照者", "pclip wrench people m-plus"], ["删除参照者", "pclip wrench people m-x"],
    ["添加过去案件参照者", "books people m-plus"], ["删除过去案件参照者", "books people m-x"], ["获取确认者", "pclip glasses people"],
    ["添加确认者", "pclip glasses people m-plus"], ["删除确认者", "pclip glasses people m-x"], ["获取用户数据案件属性信息", "uclip ticket"],
    ["登录 · 更新用户数据属性案件信息", "uclip ticket m-pencil"], ["删除用户数据案件属性信息", "uclip ticket m-x"], ["存档处理", "archive"],
    ["处理对象者再展开", "pclip pcheck people b-loop"], ["删除Workflow案件信息", "db doc trash"], ["删除BIS案件从属信息", "db doc bisx trash"],
    ["删除Forma应用程序的登记数据", "db form trash"], ["获取处理履历信息", "hist steps"], ["", ""],
    ["获取未处理一览", "stack stackcheck"], ["获取完成案件一览", "stack stackend"], ["获取文件上传信息", "files"]
  ];
  const body = ([label, icons]) =>
    `<svg class="size-10 shrink-0 bg-white" aria-hidden="true">${icons.split(" ").map(i => `<use href="#${i}"/>`).join("")}</svg>
     <span class="max-h-10 w-[73px] overflow-hidden wrap-anywhere">${label}</span>`;

  document.getElementById("categories").innerHTML = categories.map(c => c[0] === "IM-BIS"
    ? `<button class="relative flex h-[52px] items-center gap-[5px] bg-white pl-[2px] text-left text-[11px] leading-[15px] font-bold shadow-[1px_0_2px_rgba(0,0,0,0.3)]">${body(c)}<span class="absolute -top-2 -right-1 -bottom-[2px] -left-px rounded-md border-3 border-[#e5633f]"></span></button>`
    : `<button class="flex h-[52px] items-center gap-[5px] border border-l-0 border-[#dcdcdc] bg-[#f3f3f3] pl-[2px] text-left text-[11px] leading-[15px] font-bold">${body(c)}</button>`).join("");

  document.getElementById("tasks").innerHTML = tasks.map(t => t[1] === ""
    ? `<div class="h-[52px] border border-[#dcdcdc] bg-[#f3f3f3]"></div>`
    : t[1] === "files"
    ? `<button class="flex h-[52px] items-center gap-[5px] border border-white bg-white px-[5px] text-left text-[11px] leading-[15px] font-bold shadow-[1px_1px_2px_rgba(0,0,0,0.3)]">${body(t)}</button>`
    : `<button class="flex h-[52px] items-center gap-[5px] border border-[#dcdcdc] bg-[#f3f3f3] px-[5px] text-left text-[11px] leading-[15px] font-bold">${body(t)}</button>`).join("");
</script>
</body>
</html>
